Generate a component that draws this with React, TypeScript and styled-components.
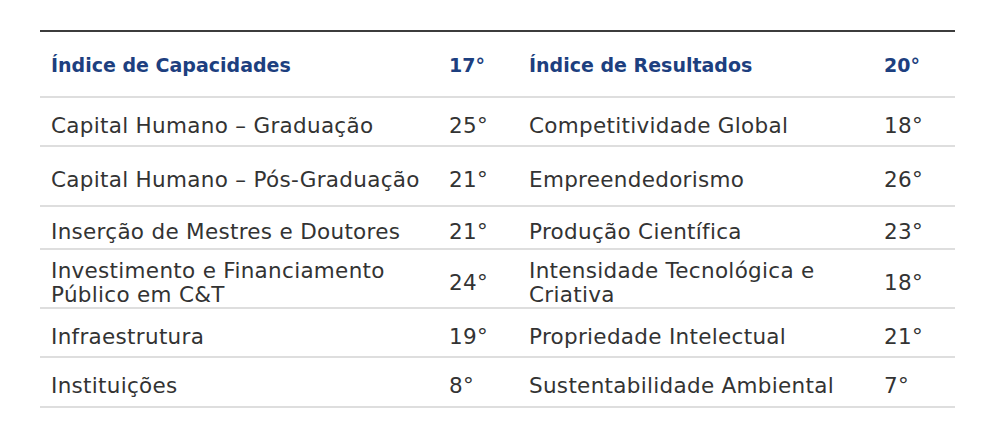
import styled, { createGlobalStyle } from "styled-components";

const GlobalStyle = createGlobalStyle`
    body {
        margin: 0;
        background: #fff;
        font-family: "DejaVu Sans", "Liberation Sans", sans-serif;
    }
`;

const Page = styled.div`
    padding: 30px 0 0 40px;
`;

const Table = styled.table`
    width: 915px;
    border-collapse: collapse;
    table-layout: fixed;
    border-top: 2px solid #3c3c3c;
`;

const Row = styled.tr<{ $h: number }>`
    height: ${p => p.$h}px;
    border-bottom: 2px solid #dedede;
`;

const Cell = styled.td<{ $head?: boolean }>`
    padding: ${p => (p.$head ? "2px" : "8px")} 0 0 11px;
    vertical-align: middle;
    font-size: ${p => (p.$head ? "19px" : "21.5px")};
    font-weight: ${p => (p.$head ? 700 : 400)};
    letter-spacing: ${p => (p.$head ? "0" : "0.3px")};
    color: ${p => (p.$head ? "#1d3f7f" : "#333333")};
    line-height: 24px;
`;

type Line = { left: string; leftRank: string; right: string; rightRank: string; h: number };

const header: Line = {
    left: "Índice de Capacidades",
    leftRank: "17°",
    right: "Índice de Resultados",
    rightRank: "20°",
    h: 66,
};

const rows: Line[] = [
    { left: "Capital Humano – Graduação", leftRank: "25°", right: "Competitividade Global", rightRank: "18°", h: 49 },
    { left: "Capital Humano – Pós-Graduação", leftRank: "21°", right: "Empreendedorismo", rightRank: "26°", h: 60 },
    { left: "Inserção de Mestres e Doutores", leftRank: "21°", right: "Produção Científica", rightRank: "23°", h: 43 },
    { left: "Investimento e Financiamento Público em C&T", leftRank: "24°", right: "Intensidade Tecnológica e Criativa", rightRank: "18°", h: 59 },
    { left: "Infraestrutura", leftRank: "19°", right: "Propriedade Intelectual", rightRank: "21°", h: 49 },
    { left: "Instituições", leftRank: "8°", right: "Sustentabilidade Ambiental", rightRank: "7°", h: 50 },
];

const App = () => (
    <Page>
        <GlobalStyle />
        <Table>
            <colgroup>
                <col style={{ width: 398 }} />
                <col style={{ width: 80 }} />
                <col style={{ width: 355 }} />
                <col style={{ width: 82 }} />
            </colgroup>
            <tbody>
                <Row $h={header.h}>
                    <Cell $head>{header.left}</Cell>
                    <Cell $head>{header.leftRank}</Cell>
                    <Cell $head>{header.right}</Cell>
                    <Cell $head>{header.rightRank}</Cell>
                </Row>
                {rows.map(r => (
                    <Row $h={r.h} key={r.left}>
                        <Cell>{r.left}</Cell>
                        <Cell>{r.leftRank}</Cell>
                        <Cell>{r.right}</Cell>
                        <Cell>{r.rightRank}</Cell>
                    </Row>
                ))}
            </tbody>
        </Table>
    </Page>
);

export default App;
